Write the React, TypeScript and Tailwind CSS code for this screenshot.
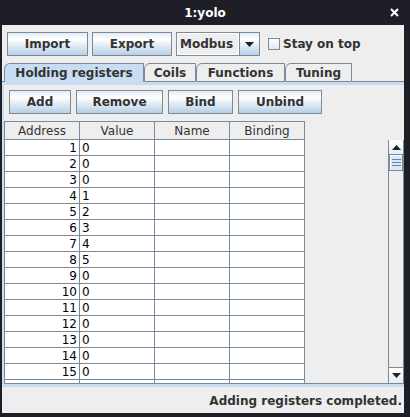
import React from "react";

const btn =
  "h-[24px] flex items-center justify-center border border-[#7a8a99] bg-[linear-gradient(to_bottom,#e4edf6_0%,#ffffff_30%,#e4edf6_55%,#b8cfe5_100%)] text-[12px] font-bold text-[#333333]";

const rows = [0, 0, 0, 1, 2, 3, 4, 5, 0, 0, 0, 0, 0, 0, 0];

function Arrow({ up }: { up?: boolean }) {
  return (
    <svg width="9" height="5" viewBox="0 0 9 5">
      <polygon points={up ? "0,5 9,5 4.5,0" : "0,0 9,0 4.5,5"} fill="#222" />
    </svg>
  );
}

function Tab({ label, w, active }: { label: string; w: string; active?: boolean }) {
  return (
    <div
      className={`${w} h-[19px] flex items-center justify-center rounded-tl-[6px] border-t border-l border-r border-[#7a8a99] text-[12px] font-bold text-[#333333] ${
        active ? "bg-[#c8ddf2]" : "bg-[#eeeeee] border-b"
      }`}
    >
      {label}
    </div>
  );
}

export default function App() {
  return (
    <div
      className="w-[410px] h-[417px] bg-[#1e1f26] flex flex-col overflow-hidden"
      style={{ fontFamily: '"DejaVu Sans", sans-serif' }}
    >
      <div className="h-[25px] relative flex items-center justify-center text-white text-[12px] font-bold">
        1:yolo
        <svg className="absolute right-[11px] top-[8px]" width="9" height="9" viewBox="0 0 9 9">
          <path d="M1 1 L8 8 M8 1 L1 8" stroke="#fff" strokeWidth="2" />
        </svg>
      </div>

      <div className="ml-[2px] w-[402px] h-[388px] bg-[#eeeeee] flex flex-col pt-[7px]">
        {/* toolbar */}
        <div className="h-[24px] flex items-center pl-[5px]">
          <div className={`${btn} w-[81px]`}>Import</div>
          <div className={`${btn} w-[80px] ml-[4px]`}>Export</div>
          <div className="ml-[4px] h-[24px] flex border border-[#7a8a99]">
            <div className="w-[62px] flex items-center pl-[2px] bg-[#eeeeee] border border-[#ffffff] text-[12px] font-bold text-[#333333]">
              Modbus
            </div>
            <div className="w-[20px] flex items-center justify-center border-l border-[#7a8a99] bg-[linear-gradient(to_bottom,#e4edf6_0%,#ffffff_30%,#e4edf6_55%,#b8cfe5_100%)]">
              <Arrow />
            </div>
          </div>
          <div className="ml-[8px] w-[12px] h-[12px] border border-[#7a8a99] bg-[linear-gradient(to_bottom,#ffffff,#dde8f3)]" />
          <span className="ml-[3px] text-[12px] font-bold text-[#333333]">Stay on top</span>
        </div>

        {/* tabs */}
        <div className="mt-[7px] flex items-end">
          <div className="w-[2px] h-[19px] border-b border-[#7a8a99]" />
          <Tab label="Holding registers" w="w-[140px]" active />
          <Tab label="Coils" w="w-[52px]" />
          <Tab label="Functions" w="w-[89px]" />
          <Tab label="Tuning" w="w-[67px]" />
          <div className="flex-1 h-[19px] border-b border-[#7a8a99]" />
        </div>

        {/* panel */}
        <div className="border-l-2 border-t-[3px] border-b-[3px] border-[#c8ddf2] flex flex-col">
          <div className="h-[29px] pt-[5px] pl-[5px] flex">
            <div className={`${btn} w-[62px]`}>Add</div>
            <div className={`${btn} w-[87px] ml-[5px]`}>Remove</div>
            <div className={`${btn} w-[65px] ml-[5px]`}>Bind</div>
            <div className={`${btn} w-[84px] ml-[5px]`}>Unbind</div>
          </div>

          <div className="mt-[7px] flex border-b border-[#7a8a99]">
            <div className="w-[301px] flex flex-col border-l border-[#7a8a99]">
              <div className="h-[19px] flex border-y border-[#7a8a99] text-[12px] text-[#333333]">
                {["Address", "Value", "Name", "Binding"].map((h) => (
                  <div key={h} className="w-[75px] flex items-center justify-center border-r border-[#7a8a99]">
                    {h}
                  </div>
                ))}
              </div>
              <div className="h-[243px] overflow-hidden bg-white">
                {rows.map((v, i) => (
                  <div key={i} className="h-[16px] flex border-b border-[#7a8a99] text-[12px] text-black">
                    <div className="w-[75px] flex items-center justify-end pr-[2px] border-r border-[#7a8a99]">{i + 1}</div>
                    <div className="w-[75px] flex items-center pl-[2px] border-r border-[#7a8a99]">{v}</div>
                    <div className="w-[75px] border-r border-[#7a8a99]" />
                    <div className="w-[75px] border-r border-[#7a8a99]" />
                  </div>
                ))}
                <div className="h-[16px] flex border-b border-[#7a8a99]">
                  <div className="w-[75px] border-r border-[#7a8a99]" />
                  <div className="w-[75px] border-r border-[#7a8a99]" />
                  <div className="w-[75px] border-r border-[#7a8a99]" />
                  <div className="w-[75px] border-r border-[#7a8a99]" />
                </div>
              </div>
            </div>
            <div className="w-[83px] bg-[#eeeeee]" />
            <div className="w-[16px] flex flex-col">
              <div className="h-[19px]" />
              <div className="h-[243px] flex flex-col border-x border-[#7a8a99] bg-[#eeeeee]">
                <div className="h-[15px] flex items-center justify-center border-b border-[#7a8a99] bg-[linear-gradient(to_bottom,#ffffff,#e4edf6)]">
                  <Arrow up />
                </div>
                <div className="h-[16px] flex flex-col items-center justify-center gap-[2px] border border-[#7a8a99] border-t-0 bg-[#dde8f3] shadow-[inset_1px_1px_0_#ffffff]">
                  <div className="w-[9px] h-[1px] bg-[#6382bf]" />
                  <div className="w-[9px] h-[1px] bg-[#6382bf]" />
                  <div className="w-[9px] h-[1px] bg-[#6382bf]" />
                </div>
                <div className="flex-1" />
                <div className="h-[16px] flex items-center justify-center border-t border-[#7a8a99] bg-[linear-gradient(to_bottom,#ffffff,#e4edf6)]">
                  <Arrow />
                </div>
              </div>
            </div>
          </div>
        </div>

        {/* status */}
        <div className="flex-1 flex items-center justify-end pr-[2px] pt-[1px] text-[12px] font-bold text-[#333333]">
          Adding registers completed.
        </div>
      </div>
    </div>
  );
}
